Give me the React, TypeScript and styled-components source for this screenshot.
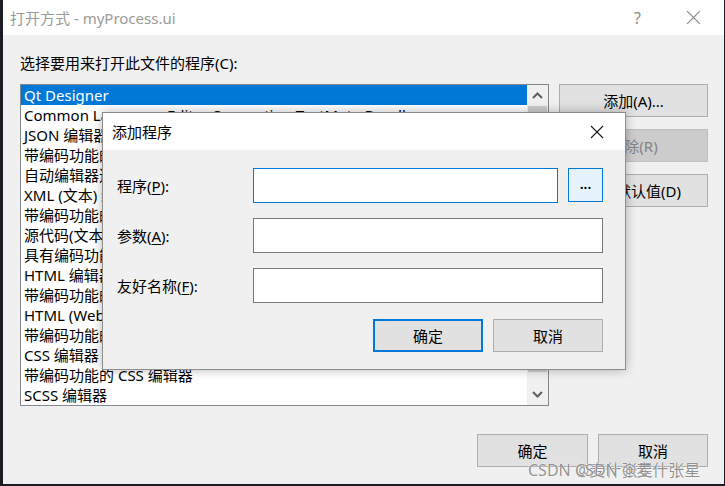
import styled, { createGlobalStyle } from 'styled-components'

const GlobalStyle = createGlobalStyle`
  html, body {
    margin: 0;
    padding: 0;
    background: #1b1d22;
  }
  body {
    font-family: 'Noto Sans', 'Noto Sans CJK SC', sans-serif;
    font-size: 15px;
    color: #000;
  }
`

const programs = [
  'Qt Designer',
  'Common Language Editor Supporting TextMate Bundles',
  'JSON 编辑器',
  '带编码功能的 JSON 编辑器',
  '自动编辑器选择器 (XML)',
  'XML (文本) 编辑器',
  '带编码功能的 XML (文本) 编辑器',
  '源代码(文本)编辑器',
  '具有编码功能的源代码(文本)编辑器',
  'HTML 编辑器',
  '带编码功能的 HTML 编辑器',
  'HTML (Web 窗体)编辑器',
  '带编码功能的 HTML (Web 窗体)编辑器',
  'CSS 编辑器',
  '带编码功能的 CSS 编辑器',
  'SCSS 编辑器',
]

const CloseIcon = ({ color, size }: { color: string; size: number }) => (
  <svg width={size} height={size} viewBox="0 0 14 14">
    <path d="M1 1 L13 13 M13 1 L1 13" stroke={color} strokeWidth="1.1" fill="none" />
  </svg>
)

const Chevron = ({ down }: { down?: boolean }) => (
  <svg width="11" height="7" viewBox="0 0 11 7">
    <path d={down ? 'M1 1 L5.5 5.5 L10 1' : 'M1 6 L5.5 1.5 L10 6'} stroke="#606060" strokeWidth="2" fill="none" />
  </svg>
)

export default function App() {
  return (
    <>
      <GlobalStyle />
      <Screen>
        <Window>
          <TitleBar>
            <TitleText>打开方式 - myProcess.ui</TitleText>
            <TitleControls>
              <HelpMark>?</HelpMark>
              <CloseIcon color="#8a8a8a" size={15} />
            </TitleControls>
          </TitleBar>
          <Body>
            <Caption>选择要用来打开此文件的程序(C):</Caption>
            <MainRow>
              <ListBox>
                <Items>
                  {programs.map((p, i) => (
                    <Item key={p} selected={i === 0}>
                      {p}
                    </Item>
                  ))}
                </Items>
                <ScrollBar>
                  <ArrowBox>
                    <Chevron />
                  </ArrowBox>
                  <Track>
                    <Thumb />
                  </Track>
                  <ArrowBox>
                    <Chevron down />
                  </ArrowBox>
                </ScrollBar>
              </ListBox>
              <SideButtons>
                <WinButton>添加(A)...</WinButton>
                <WinButton disabled>移除(R)</WinButton>
                <WinButton>设为默认值(D)</WinButton>
              </SideButtons>
            </MainRow>
            <Footer>
              <WinButton width={111}>确定</WinButton>
              <WinButton width={110}>取消</WinButton>
            </Footer>
          </Body>

          <Dialog>
            <DialogTitleBar>
              <DialogTitle>添加程序</DialogTitle>
              <CloseIcon color="#1a1a1a" size={14} />
            </DialogTitleBar>
            <DialogBody>
              <FieldRow>
                <FieldLabel>
                  程序(<u>P</u>):
                </FieldLabel>
                <FieldInputs>
                  <TextInput focused />
                  <BrowseButton>...</BrowseButton>
                </FieldInputs>
              </FieldRow>
              <FieldRow>
                <FieldLabel>
                  参数(<u>A</u>):
                </FieldLabel>
                <FieldInputs>
                  <TextInput />
                </FieldInputs>
              </FieldRow>
              <FieldRow>
                <FieldLabel>
                  友好名称(<u>F</u>):
                </FieldLabel>
                <FieldInputs>
                  <TextInput />
                </FieldInputs>
              </FieldRow>
              <DialogFooter>
                <WinButton width={110} primary>
                  确定
                </WinButton>
                <WinButton width={110}>取消</WinButton>
              </DialogFooter>
            </DialogBody>
          </Dialog>

          <Watermark left={525}>CSDN @麦什张星</Watermark>
          <Watermark left={572}>CSDN @麦什张星</Watermark>
        </Window>
      </Screen>
    </>
  )
}

const Screen = styled.div`
  display: flex;
  padding-left: 3px;
  width: 725px;
  height: 486px;
  box-sizing: border-box;
  overflow: hidden;
`
const Window = styled.div`
  position: relative;
  width: 721px;
  height: 484px;
  background: #f0f0f0;
  display: flex;
  flex-direction: column;
  overflow: hidden;
`
const TitleBar = styled.div`
  height: 35px;
  flex: none;
  background: #fff;
  display: flex;
  align-items: center;
  justify-content: space-between;
  padding: 0 23px 0 7px;
`
const TitleText = styled.div`
  color: #9a9a9a;
  font-size: 15px;
`
const TitleControls = styled.div`
  display: flex;
  align-items: center;
  gap: 45px;
`
const HelpMark = styled.span`
  color: #8a8a8a;
  font-size: 16px;
`
const Body = styled.div`
  flex: 1;
  display: flex;
  flex-direction: column;
  padding: 18px 16px 0 17px;
`
const Caption = styled.div`
  line-height: 20px;
  margin-bottom: 11px;
`
const MainRow = styled.div`
  display: flex;
  gap: 10px;
  align-items: flex-start;
`
const ListBox = styled.div`
  width: 529px;
  height: 322px;
  box-sizing: border-box;
  border: 1px solid #828790;
  background: #fff;
  display: flex;
`
const Items = styled.div`
  flex: 1;
  overflow: hidden;
`
const Item = styled.div<{ selected?: boolean }>`
  height: 20px;
  line-height: 20px;
  padding-left: 3px;
  white-space: nowrap;
  background: ${(p) => (p.selected ? '#0078d7' : 'transparent')};
  color: ${(p) => (p.selected ? '#fff' : '#000')};
`
const ScrollBar = styled.div`
  width: 21px;
  background: #f0f0f0;
  display: flex;
  flex-direction: column;
`
const ArrowBox = styled.div`
  height: 21px;
  display: flex;
  align-items: center;
  justify-content: center;
`
const Track = styled.div`
  flex: 1;
  padding: 0 1px;
`
const Thumb = styled.div`
  height: 266px;
  background: #cdcdcd;
`
const SideButtons = styled.div`
  display: flex;
  flex-direction: column;
  gap: 12px;
`
const WinButton = styled.div<{ disabled?: boolean; width?: number; primary?: boolean }>`
  width: ${(p) => p.width ?? 149}px;
  height: 33px;
  box-sizing: border-box;
  display: flex;
  align-items: center;
  justify-content: center;
  background: ${(p) => (p.disabled ? '#cccccc' : '#e1e1e1')};
  border: ${(p) => (p.primary ? '2px solid #0078d7' : p.disabled ? '1px solid #bfbfbf' : '1px solid #adadad')};
  color: ${(p) => (p.disabled ? '#838383' : '#000')};
`
const Footer = styled.div`
  display: flex;
  justify-content: flex-end;
  gap: 10px;
  margin-top: 28px;
`
const Dialog = styled.div`
  position: absolute;
  left: 99px;
  top: 112px;
  width: 524px;
  height: 258px;
  box-sizing: border-box;
  border: 1px solid #8c8c8c;
  background: #f0f0f0;
  box-shadow: 0 0 10px rgba(0, 0, 0, 0.28);
  display: flex;
  flex-direction: column;
`
const DialogTitleBar = styled.div`
  height: 37px;
  flex: none;
  background: #fff;
  display: flex;
  align-items: center;
  justify-content: space-between;
  padding: 0 21px 0 9px;
`
const DialogTitle = styled.div`
  font-size: 15px;
`
const DialogBody = styled.div`
  display: flex;
  flex-direction: column;
  gap: 15px;
  padding: 18px 22px 0 14px;
`
const FieldRow = styled.div`
  display: flex;
  align-items: center;
`
const FieldLabel = styled.div`
  width: 136px;
  flex: none;
  u {
    text-decoration-thickness: 1px;
    text-underline-offset: 2px;
  }
`
const FieldInputs = styled.div`
  width: 350px;
  display: flex;
  gap: 10px;
`
const TextInput = styled.div<{ focused?: boolean }>`
  flex: 1;
  height: 35px;
  box-sizing: border-box;
  background: #fff;
  border: 1px solid ${(p) => (p.focused ? '#0078d7' : '#7a7a7a')};
`
const BrowseButton = styled.div`
  width: 35px;
  height: 34px;
  box-sizing: border-box;
  background: #e5f1fb;
  border: 1px solid #0078d7;
  display: flex;
  align-items: center;
  justify-content: center;
  font-size: 14px;
  font-weight: 600;
  padding-bottom: 4px;
`
const DialogFooter = styled.div`
  display: flex;
  justify-content: flex-end;
  gap: 10px;
  margin-top: 1px;
`
const Watermark = styled.div<{ left: number }>`
  position: absolute;
  top: 457px;
  left: ${(p) => p.left}px;
  font-size: 16px;
  color: rgba(95, 95, 95, 0.7);
  white-space: nowrap;
  text-shadow: 0 0 1px #fff, 0 0 1px #fff;
  pointer-events: none;
`
